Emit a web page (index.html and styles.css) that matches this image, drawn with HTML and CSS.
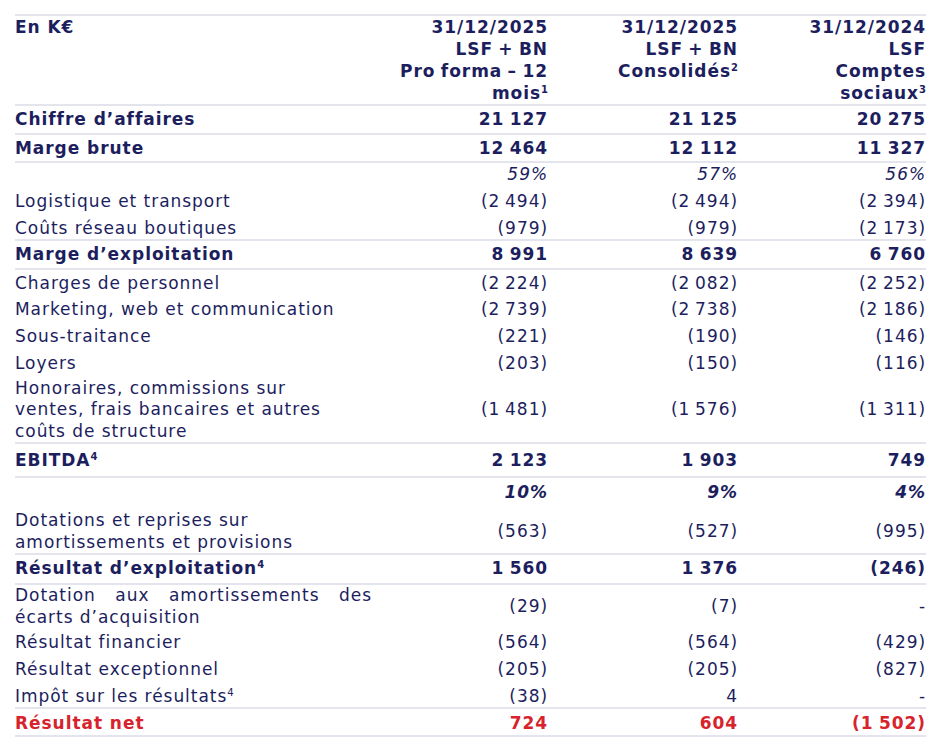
FILE: index.html
```html
<!DOCTYPE html>
<html lang="fr">
<head>
<meta charset="utf-8">
<title>Compte de résultat</title>
<link rel="stylesheet" href="styles.css">
</head>
<body>
<div class="wrap">
<table class="pl">
  <colgroup>
    <col class="c-label"><col class="c-a"><col class="c-b"><col class="c-c">
  </colgroup>
  <thead>
    <tr class="head">
      <th class="lbl">En K€</th>
      <th class="num">31/12/2025<br>LSF + BN<br>Pro forma – 12<br>mois<sup>1</sup></th>
      <th class="num">31/12/2025<br>LSF + BN<br>Consolidés<sup>2</sup></th>
      <th class="num">31/12/2024<br>LSF<br>Comptes<br>sociaux<sup>3</sup></th>
    </tr>
  </thead>
  <tbody>
    <tr class="bd strong">
      <td class="lbl">Chiffre d’affaires</td><td class="num">21 127</td><td class="num">21 125</td><td class="num">20 275</td>
    </tr>
    <tr class="bd strong">
      <td class="lbl">Marge brute</td><td class="num">12 464</td><td class="num">12 112</td><td class="num">11 327</td>
    </tr>
    <tr class="pct">
      <td class="lbl"></td><td class="num">59%</td><td class="num">57%</td><td class="num">56%</td>
    </tr>
    <tr>
      <td class="lbl">Logistique et transport</td><td class="num">(2 494)</td><td class="num">(2 494)</td><td class="num">(2 394)</td>
    </tr>
    <tr class="bd pb0">
      <td class="lbl">Coûts réseau boutiques</td><td class="num">(979)</td><td class="num">(979)</td><td class="num">(2 173)</td>
    </tr>
    <tr class="bd strong">
      <td class="lbl">Marge d’exploitation</td><td class="num">8 991</td><td class="num">8 639</td><td class="num">6 760</td>
    </tr>
    <tr>
      <td class="lbl">Charges de personnel</td><td class="num">(2 224)</td><td class="num">(2 082)</td><td class="num">(2 252)</td>
    </tr>
    <tr>
      <td class="lbl">Marketing, web et communication</td><td class="num">(2 739)</td><td class="num">(2 738)</td><td class="num">(2 186)</td>
    </tr>
    <tr>
      <td class="lbl">Sous-traitance</td><td class="num">(221)</td><td class="num">(190)</td><td class="num">(146)</td>
    </tr>
    <tr>
      <td class="lbl">Loyers</td><td class="num">(203)</td><td class="num">(150)</td><td class="num">(116)</td>
    </tr>
    <tr class="bd multi">
      <td class="lbl">Honoraires, commissions sur<br>ventes, frais bancaires et autres<br>coûts de structure</td><td class="num">(1 481)</td><td class="num">(1 576)</td><td class="num">(1 311)</td>
    </tr>
    <tr class="bd strong tall">
      <td class="lbl">EBITDA<sup>4</sup></td><td class="num">2 123</td><td class="num">1 903</td><td class="num">749</td>
    </tr>
    <tr class="pct pct-strong">
      <td class="lbl"></td><td class="num">10%</td><td class="num">9%</td><td class="num">4%</td>
    </tr>
    <tr class="bd multi">
      <td class="lbl">Dotations et reprises sur<br>amortissements et provisions</td><td class="num">(563)</td><td class="num">(527)</td><td class="num">(995)</td>
    </tr>
    <tr class="bd strong pb4">
      <td class="lbl">Résultat d’exploitation<sup>4</sup></td><td class="num">1 560</td><td class="num">1 376</td><td class="num">(246)</td>
    </tr>
    <tr class="multi flush">
      <td class="lbl"><span class="just">Dotation aux amortissements des</span>écarts d’acquisition</td><td class="num">(29)</td><td class="num">(7)</td><td class="num">-</td>
    </tr>
    <tr>
      <td class="lbl">Résultat financier</td><td class="num">(564)</td><td class="num">(564)</td><td class="num">(429)</td>
    </tr>
    <tr>
      <td class="lbl">Résultat exceptionnel</td><td class="num">(205)</td><td class="num">(205)</td><td class="num">(827)</td>
    </tr>
    <tr class="bd pt3">
      <td class="lbl">Impôt sur les résultats<sup>4</sup></td><td class="num">(38)</td><td class="num">4</td><td class="num">-</td>
    </tr>
    <tr class="bd strong red last">
      <td class="lbl">Résultat net</td><td class="num">724</td><td class="num">604</td><td class="num">(1 502)</td>
    </tr>
  </tbody>
</table>
</div>
</body>
</html>
```

FILE: styles.css
```css
html, body {
  margin: 0;
  padding: 0;
  background: #ffffff;
}

.wrap {
  padding: 14px 0 0 15px;
}

.pl {
  table-layout: fixed;
  width: 911px;
  border-collapse: collapse;
  font-family: "DejaVu Sans", "Liberation Sans", sans-serif;
  font-size: 17px;
  letter-spacing: 0.95px;
  color: #1c1e5e;
}

.c-label { width: 357px; }
.c-a { width: 176px; }
.c-b { width: 190px; }
.c-c { width: 188px; }

.pl th,
.pl td {
  padding: 2px 0 2.7px;
  line-height: 22px;
  vertical-align: middle;
}

.pl .lbl { text-align: left; }
.pl .num {
  text-align: right;
  word-spacing: -1.5px;
}

.head th {
  padding: 0;
  font-weight: 700;
  vertical-align: top;
  border-top: 2px solid #e4e4ed;
  border-bottom: 2px solid #e4e4ed;
}

.bd td { border-bottom: 2px solid #e4e4ed; }

.strong td { font-weight: 700; }

.red td { color: #d7232c; }

.pct td {
  font-style: italic;
  padding: 0 0 3px;
}

.pct-strong td {
  font-weight: 700;
  padding: 3px 0 6px;
}

.multi td {
  line-height: 21.5px;
  padding: 1px 0 0;
}

.flush td { padding: 0 0 1px; }

.tall td { padding: 5px 0; }

.pb4 td { padding: 2px 0 4px; }

.pb0 td { padding: 2px 0 0; }

.pt3 td { padding: 3px 0 0; }

.last td { padding: 3px 0 0.7px; }

.just {
  display: block;
  text-align: justify;
  text-align-last: justify;
}

sup {
  font-size: 10px;
  line-height: 0;
  vertical-align: 6px;
  letter-spacing: 0;
  font-weight: 400;
}

.strong sup,
.head sup { font-weight: 700; }
```
